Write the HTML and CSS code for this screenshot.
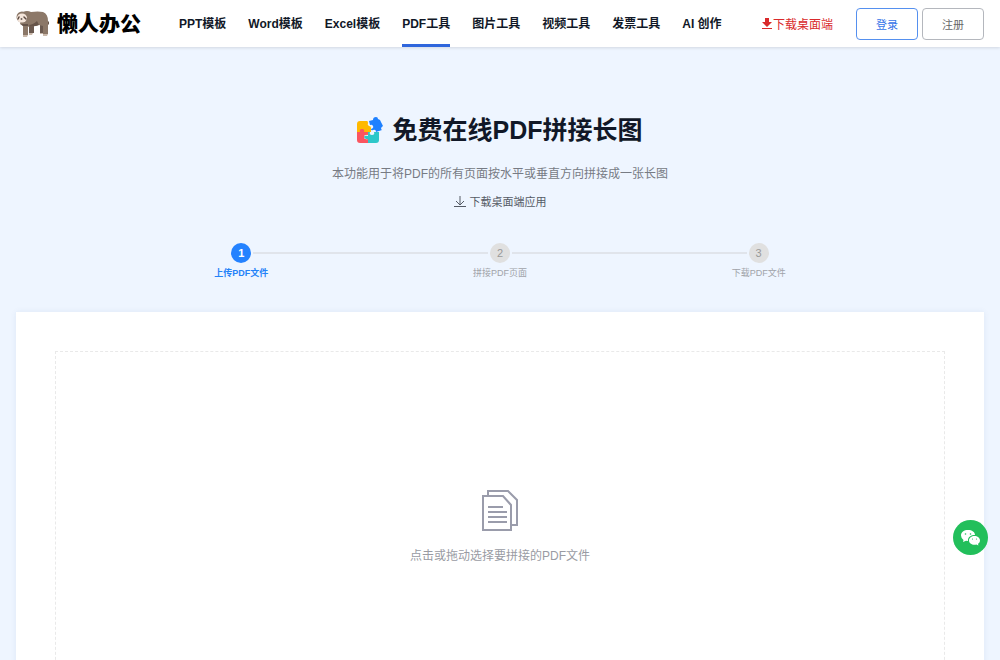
FILE: index.html
```
<!DOCTYPE html>
<html lang="zh-CN">
<head>
    <meta charset="UTF-8">
    <meta name="viewport" content="width=device-width, initial-scale=1.0">
    <title>免费在线PDF拼接长图 - 懒人办公</title>
    <link rel="stylesheet" href="styles.css">
</head>
<body>
    <header class="header">
        <a class="logo" href="#">
            <svg class="logo-icon" viewBox="0 0 34 28" aria-hidden="true">
                <path fill="#6b5a50" d="M13 14h5v9h-5zM24 13h4v10h-4z"/>
                <path fill="#8c7868" d="M7 2Q11 0 15 2q7-1 12 0 5 2 5 9v13h-5v-8l-4-1q-5 2-9 1l-2 1v8H7v-9l-3-2z"/>
                <path fill="#665449" d="M12 15q5 0 9-4l2 4q-5 2-9 1zM5 14h7v2H7zM32 11l1 1v2l-1 1z"/>
                <circle cx="6" cy="7" r="5.500" fill="#8c7868"/>
                <ellipse cx="6" cy="8" rx="5" ry="4.500" fill="#f4e5da"/>
                <path stroke="#5a483f" stroke-width="1.500" stroke-linecap="round" d="m3 7-1 2M8 7l2 2"/>
                <ellipse cx="5.500" cy="9" rx="1" ry=".7" fill="#39302c"/>
                <path fill="#c9b8aa" d="M7 25h5l-1 2H7zM27 24h5l-1 2h-4zM13 23h4l-1 2h-3zM24 23h3v1h-3z"/>
            </svg>
            <span>懒人办公</span>
        </a>
        <nav class="nav">
            <a href="#">PPT模板</a>
            <a href="#">Word模板</a>
            <a href="#">Excel模板</a>
            <a class="active" href="#">PDF工具</a>
            <a href="#">图片工具</a>
            <a href="#">视频工具</a>
            <a href="#">发票工具</a>
            <a href="#">AI 创作</a>
        </nav>
        <div class="header-right">
            <a class="download-link" href="#">
                <svg viewBox="0 0 12 12" aria-hidden="true"><path fill="currentColor" d="M4 0h4v4h3L6 9 1 4h3zM1 10h10v1H1z"/></svg>
                <span>下载桌面端</span>
            </a>
            <div class="account">
                <button class="btn btn-primary" type="button">登录</button>
                <button class="btn" type="button">注册</button>
            </div>
        </div>
    </header>

    <main>
        <section class="intro">
            <h1>
                <svg class="title-icon" viewBox="0 0 26 26" aria-hidden="true">
                    <path fill="#2ec7c9" d="M11 15h2q-1 3 2 3t2-3h5v8q0 3-3 3h-8v-4H9q-2-1-2-2 0-2 4-1z"/>
                    <path fill="#ffb900" d="M3 4h7q1 0 1 2-1 2 1 3 2 0 2 2v4h-3q0 3-2 3t-2-3H0V7q0-3 3-3z"/>
                    <path fill="#fa5560" d="M0 15h3q-1-3 2-3t2 3h4v3q-4-1-4 2t4 2v4H3q-3 0-3-3z"/>
                    <path fill="#1e80ff" d="m12 4 4-1q0-3 3-3 2 0 2 2l2 1 3 6q-2 1-2 3l1 1-6 2q0-3-3-2-2 1-2-1 3-1 2-3-1-2-3-1z"/>
                </svg>
                免费在线PDF拼接长图
            </h1>
            <p>本功能用于将PDF的所有页面按水平或垂直方向拼接成一张长图</p>
            <a class="app-link" href="#">
                <svg viewBox="0 0 12 12" aria-hidden="true"><path fill="none" stroke="currentColor" d="M6 0v9M2 5l4 4 4-4M0 10.500h12"/></svg>
                下载桌面端应用
            </a>
        </section>

        <ol class="steps">
            <li class="current"><span class="step-number">1</span><span>上传PDF文件</span></li>
            <li><span class="step-number">2</span><span>拼接PDF页面</span></li>
            <li><span class="step-number">3</span><span>下载PDF文件</span></li>
        </ol>

        <section class="card">
            <button class="upload" type="button">
                <svg class="upload-icon" viewBox="0 0 36 42" aria-hidden="true">
                    <g fill="none" stroke="#9a9cab" stroke-width="2">
                        <path d="M6 5V1h20l9 9v25h-5"/>
                        <path d="M1 6h20l8 9v25H1z"/>
                        <path d="M6 17h15M6 22h19M6 27h19M6 32h19"/>
                    </g>
                </svg>
                <span>点击或拖动选择要拼接的PDF文件</span>
            </button>
        </section>
    </main>

    <button class="wechat" type="button" aria-label="微信客服">
        <svg viewBox="0 0 20 16" aria-hidden="true">
            <path fill="#fff" d="M7 0c4 0 7 2 7 5-4 0-7 2-7 5v1l-2-.3L2 12l.5-2Q0 8 0 5.500C0 2 3 0 7 0z"/>
            <path fill="#fff" d="M13.500 6c3 0 5.500 2 5.500 4.500 0 1.500-.8 2.500-2 3.300l.4 1.700-2-1q-1 .3-2 .3C10.500 14.800 8 13 8 10.500S10.500 6 13.500 6z"/>
            <g fill="#22bf5b"><circle cx="4.500" cy="4" r=".8"/><circle cx="9.500" cy="4" r=".8"/><circle cx="11.500" cy="9" r=".6"/><circle cx="15.500" cy="9" r=".6"/></g>
        </svg>
    </button>
</body>
</html>
```
FILE: styles.css
```
* {
    box-sizing: border-box;
}
body {
    margin: 0;
    background-color: #eef5ff;
    color: #111827;
    font-family: "Liberation Sans", "Noto Sans CJK SC", sans-serif;
    font-size: 12px;
}
a {
    color: inherit;
    text-decoration: none;
}
button {
    font-family: inherit;
    cursor: pointer;
}
svg {
    display: block;
}

/* Header */
.header {
    display: flex;
    align-items: center;
    height: 47px;
    padding: 0 16px;
    background-color: #fff;
    box-shadow: 0 1px 3px rgba(0, 0, 0, 0.12);
}
.logo {
    display: flex;
    align-items: center;
    gap: 7px;
    color: #000;
    font-size: 21px;
    font-weight: 900;
    line-height: 28px;
}
.logo-icon {
    width: 34px;
    height: 28px;
}
.nav {
    display: flex;
    gap: 22px;
    margin-left: 38px;
    font-weight: bold;
    line-height: 48px;
    white-space: nowrap;
}
.nav a {
    height: 47px;
}
.nav .active {
    box-shadow: inset 0 -3px #2f66dc;
}
.header-right {
    display: flex;
    align-items: center;
    gap: 23px;
    margin-left: auto;
    white-space: nowrap;
}
.download-link {
    display: flex;
    align-items: center;
    color: #d9292b;
}
.download-link svg {
    width: 12px;
    height: 12px;
}
.account {
    display: flex;
    gap: 4px;
}
.btn {
    width: 62px;
    height: 32px;
    padding: 0;
    border: 1px solid #b4b7bd;
    border-radius: 4px;
    background-color: #fff;
    color: #666;
    font-size: 11px;
}
.btn-primary {
    border-color: #5590ef;
    color: #3475e8;
}

/* Title */
.intro {
    display: flex;
    flex-direction: column;
    align-items: center;
    padding-top: 65px;
}
h1 {
    display: flex;
    align-items: center;
    gap: 9px;
    margin: 0;
    font-size: 25px;
    line-height: 36px;
}
.title-icon {
    width: 26px;
    height: 26px;
}
.intro p {
    margin: 16px 0 10px;
    color: #777b84;
    line-height: 20px;
}
.app-link {
    display: flex;
    align-items: center;
    gap: 4px;
    color: #555b65;
    font-size: 11px;
    line-height: 16px;
}
.app-link svg {
    width: 12px;
    height: 12px;
}

/* Steps */
.steps {
    display: flex;
    max-width: 776px;
    margin: 33px auto 0;
    padding: 0;
    list-style: none;
    color: #a0a3a9;
    font-size: 9px;
}
.steps li {
    display: flex;
    flex: 1;
    flex-direction: column;
    align-items: center;
    gap: 3px;
    position: relative;
    line-height: 14px;
}
.steps li + li::before {
    content: "";
    position: absolute;
    top: 9px;
    left: calc(-50% + 12px);
    width: calc(100% - 24px);
    height: 2px;
    background-color: #e0e4eb;
}
.step-number {
    width: 20px;
    height: 20px;
    border-radius: 50%;
    background-color: #e0e0e0;
    color: #999;
    font-size: 11px;
    line-height: 20px;
    text-align: center;
}
.steps .current {
    color: #2482f8;
    font-weight: bold;
}
.current .step-number {
    background-color: #2482ff;
    color: #fff;
}

/* Upload */
.card {
    margin: 32px 16px;
    padding: 39px;
    background-color: #fff;
    box-shadow: 0 0 6px rgba(40, 80, 140, 0.08);
}
.upload {
    display: flex;
    flex-direction: column;
    align-items: center;
    justify-content: center;
    gap: 14px;
    width: 100%;
    height: 354px;
    border: 1px dashed #e9e9e9;
    background-color: #fff;
    color: #999ba3;
    font-size: 12px;
    line-height: 20px;
}
.upload-icon {
    width: 36px;
    height: 42px;
}
.wechat {
    display: flex;
    align-items: center;
    justify-content: center;
    position: fixed;
    right: 12px;
    bottom: 105px;
    width: 35px;
    height: 35px;
    padding: 0;
    border: 0;
    border-radius: 50%;
    background-color: #22bf5b;
}
.wechat svg {
    width: 20px;
    height: 16px;
}
```
